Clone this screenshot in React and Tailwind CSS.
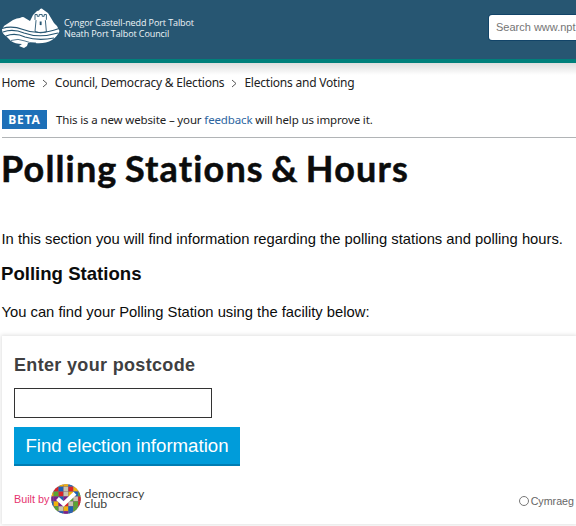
import React from 'react';

const tiles = [
  '#7a1f8f', '#1c62b7', '#f3b20c', '#f3b20c', '#2b6cb8', '#5aa532', '#7a1f8f',
  '#1c62b7', '#d8232a', '#1c62b7', '#c9c3b0', '#d8232a', '#f3b20c', '#f3b20c',
  '#f3b20c', '#5aa532', '#d8232a', '#c9c3b0', '#f3b20c', '#1c62b7', '#5aa532',
  '#7a1f8f', '#7a1f8f', '#1c62b7', '#7a1f8f', '#5aa532', '#c9c3b0', '#d8232a',
  '#1c62b7', '#f3b20c', '#7a1f8f', '#d8232a', '#c9c3b0', '#5aa532', '#d8232a',
  '#c9c3b0', '#5aa532', '#c9c3b0', '#f3b20c', '#1c62b7', '#5aa532', '#7a1f8f',
  '#1c62b7', '#1c62b7', '#1c62b7', '#7a1f8f', '#1c62b7', '#f3b20c', '#1c62b7',
];

function CouncilLogo() {
  return (
    <svg className="h-[50px] w-[64px] shrink-0" viewBox="0 0 64 50">
      <path
        fill="#fff"
        d="M2 29 Q4 25 7 24 L13 20 Q17 18 20 18 Q23 16 25 18 L30 21 L33 15 L37 11 L39 10.5 Q41 7 43 9.5 L48 13 L51 18 L54 23 L57 26 L59.5 31 Q57 37 52 40 Q45 44 35 43 L28 43 L27 46 L24 48 L19 46 L22 44 Q15 44 11 41 L6 36 Q2 34 2 29Z"
      />
      <path fill="#fff" stroke="#275672" strokeWidth="0.9" d="M35 14.5h2.2v1.8h2v-1.8h3v1.8h2v-1.8h2.2v5l-1 1 1 11.5q-6 2-11.4-.5l1-11-1-1z" />
      <path fill="#275672" d="M39.7 21.5h1.9v3.6h-1.9z" />
      <g fill="none" stroke="#275672">
        <path strokeWidth="1.2" d="M2 28.5 Q12 25.5 23 29.5 Q39 36 59 28.5" />
        <path strokeWidth="1.2" d="M3 32 Q13 28.5 24 33 Q39 38.5 58 33" />
        <path strokeWidth="1.2" d="M6 36 Q15 32.5 25 37 Q38 41 54 38" />
        <path strokeWidth="0.8" d="M11 40.5 Q18 38 25 41 Q29 43 36 43" />
      </g>
    </svg>
  );
}

function DemocracyMark() {
  return (
    <svg className="ml-[2px] h-[30px] w-[30px] shrink-0" viewBox="0 0 30 30">
      <defs>
        <clipPath id="disc">
          <circle cx="15" cy="15" r="14.7" />
        </clipPath>
      </defs>
      <g clipPath="url(#disc)">
        <rect width="30" height="30" fill="#806a78" />
        {tiles.map((fill, i) => (
          <rect key={i} x={(i % 7) * 4.9 - 2.1} y={Math.floor(i / 7) * 4.9 - 2.1} width="4.5" height="4.5" fill={fill} />
        ))}
      </g>
      <path d="M6.5 14.5 L12.6 20 L24 9.3" fill="none" stroke="#fff" strokeWidth="4.2" />
    </svg>
  );
}

function Chevron() {
  return (
    <svg className="mx-[7px] h-[9px] w-[6px]" viewBox="0 0 6 9" fill="none" stroke="#555">
      <path d="M1 1 L5 4.5 L1 8" />
    </svg>
  );
}

export default function App() {
  return (
    <div className="h-[526px] w-[576px] overflow-hidden whitespace-nowrap bg-white font-['Liberation_Sans',sans-serif] text-[#0b0c0c]">
      <header className="flex h-[63px] items-start border-b-4 border-[#00807b] bg-[#275672]">
        <CouncilLogo />
        <div className="pt-[17px] font-['Open_Sans',sans-serif] text-[9px] leading-[11px] text-[#eef4f7]">
          <p className="tracking-[-0.1px]">Cyngor Castell-nedd Port Talbot</p>
          <p className="tracking-[-0.1px]">Neath Port Talbot Council</p>
        </div>
        <div className="mt-[15px] ml-auto flex h-[25px] w-[87px] shrink-0 items-center overflow-hidden rounded-l-[3px] bg-white pl-[7px] text-[11px] text-[#757575] shadow-[0_0_0_1px_#124468]">
          Search www.npt.
        </div>
      </header>
      <div className="h-[12px] bg-linear-to-b from-[#dedede] to-white" />

      <div className="flex h-[16px] items-center pl-[1.5px] font-['Noto_Sans',sans-serif] text-[12px] tracking-[-0.22px] text-[#222]">
        <span>Home</span>
        <Chevron />
        <span>Council, Democracy &amp; Elections</span>
        <Chevron />
        <span>Elections and Voting</span>
      </div>

      <div className="ml-[2px] flex h-[47px] items-start border-b border-[#b1b4b6] pt-[19px] font-['Noto_Sans',sans-serif]">
        <span className="flex h-[19px] w-[45px] items-center justify-center bg-[#1d70b8] text-[12px] font-bold tracking-[0.8px] text-white">BETA</span>
        <p className="pl-[9px] text-[11.5px] leading-[19px] tracking-[-0.14px] text-[#222]">
          This is a new website – your <span className="text-[#2d659f]">feedback</span> will help us improve it.
        </p>
      </div>

      <h1 className="mt-[6px] h-[52px] pl-[1px] font-['Lato',sans-serif] text-[36px] leading-[48px] font-bold tracking-[1.15px] [-webkit-text-stroke:0.5px_#0b0c0c] [word-spacing:-2.5px]">
        Polling Stations &amp; Hours
      </h1>
      <p className="mt-[33px] pl-[1.5px] text-[14.78px] leading-[20px]">
        In this section you will find information regarding the polling stations and polling hours.
      </p>
      <h2 className="mt-[14px] pl-[1px] text-[18.6px] leading-[22px] font-bold">Polling Stations</h2>
      <p className="mt-[17px] pl-[1.5px] text-[14.78px] leading-[20px]">You can find your Polling Station using the facility below:</p>

      <section className="mt-[14px] ml-[2px] h-[188px] bg-white pl-[12px] shadow-[0_0_4px_1px_rgba(0,0,0,0.12)]">
        <h3 className="pt-[18px] text-[18px] leading-[22px] font-bold tracking-[0.33px] text-[#403f41]">Enter your postcode</h3>
        <input className="mt-[12px] block h-[30px] w-[198px] border border-[#333] bg-white" aria-label="Postcode" />
        <button className="mt-[9px] block h-[39px] w-[226px] border-b-2 border-[#007db3] bg-[#009cda] text-[18.65px] leading-[35px] text-white">
          Find election information
        </button>
        <div className="mt-[17px] flex h-[32px] items-center">
          <span className="text-[10.8px] text-[#e6336e]">Built by</span>
          <DemocracyMark />
          <div className="ml-[3px] font-['Lato',sans-serif] text-[12.3px] leading-[10px] tracking-[0.1px] text-[#403f41]">
            <p>democracy</p>
            <p>club</p>
          </div>
          <span className="mt-[4px] mr-[2px] ml-auto flex items-center gap-[2px] text-[10.7px] text-[#666]">
            <span className="h-[10px] w-[10px] rounded-full border border-[#777]" />
            Cymraeg
          </span>
        </div>
      </section>
    </div>
  );
}
